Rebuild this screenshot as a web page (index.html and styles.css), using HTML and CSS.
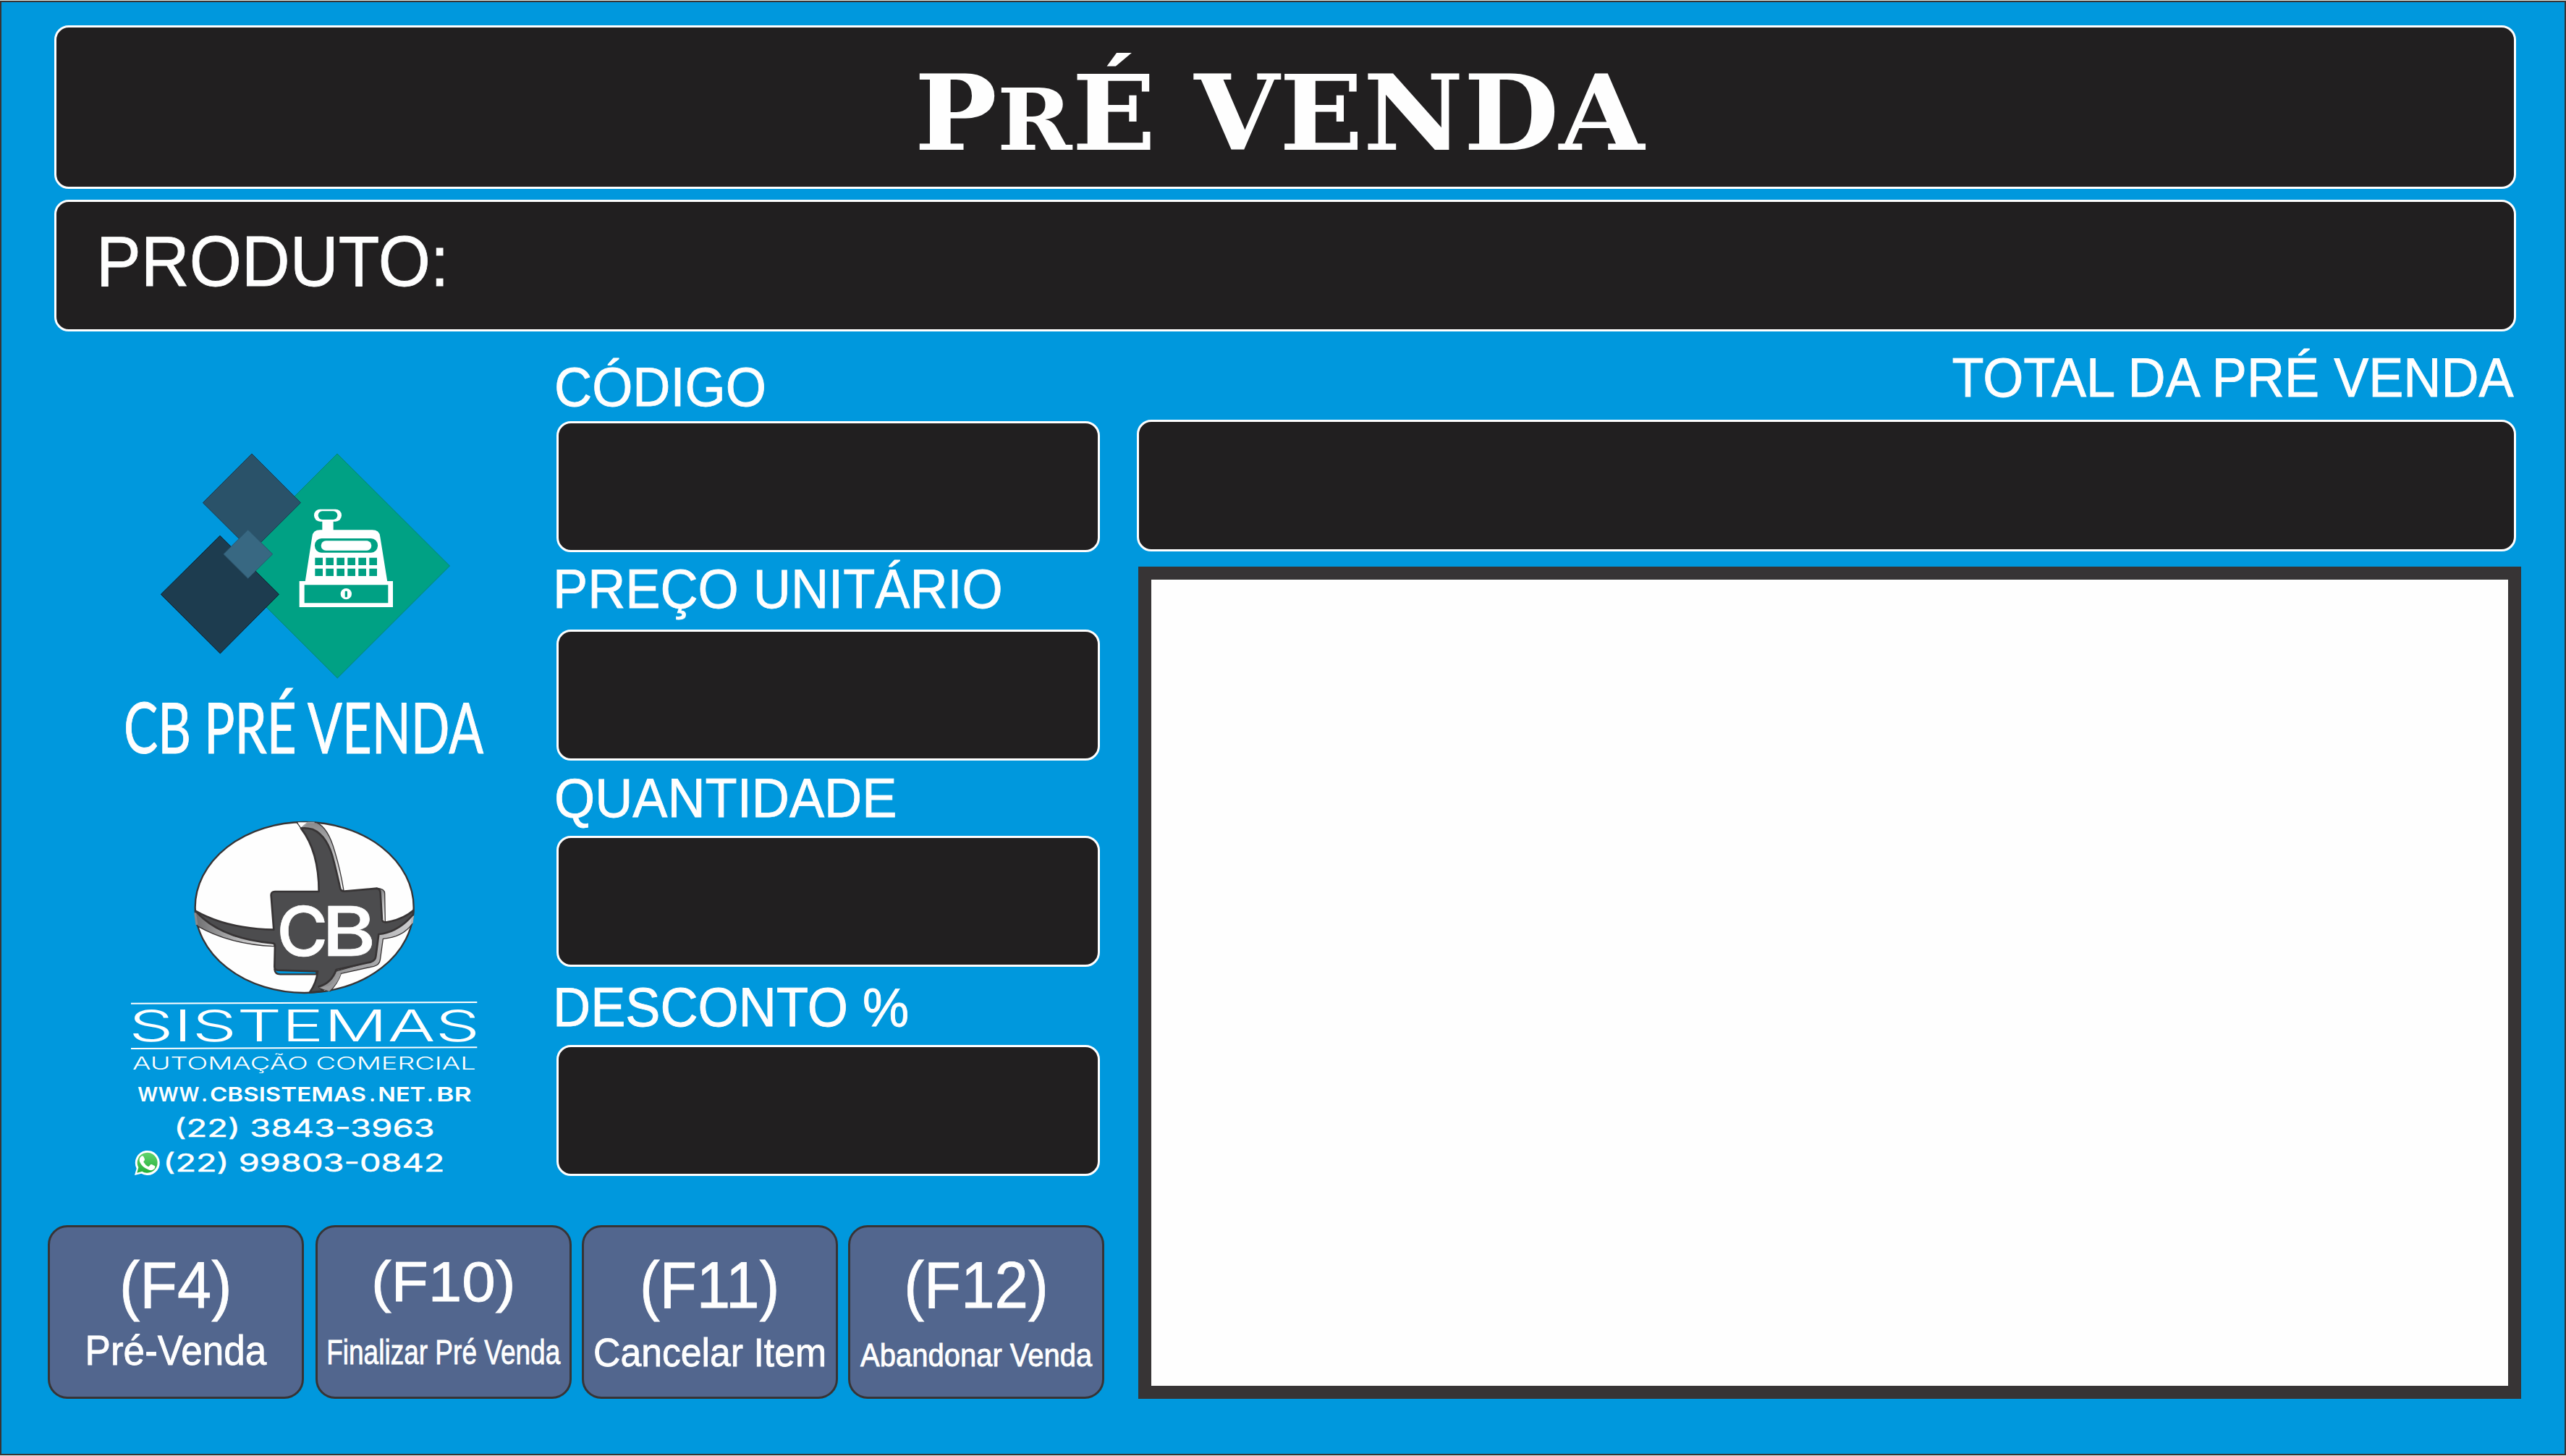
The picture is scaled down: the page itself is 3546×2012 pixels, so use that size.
FILE: index.html
```html
<!DOCTYPE html>
<html lang="pt-BR">
<head>
<meta charset="utf-8">
<title>Pré Venda</title>
<link rel="stylesheet" href="styles.css">
</head>
<body>
<div class="screen">
  <header class="panel title-bar">
    <h1 class="title">P<span class="small-cap">r</span>É VENDA</h1>
  </header>
  <section class="panel product-bar"><span class="text product-label">PRODUTO:</span></section>

  <main class="content">
    <div class="left">
      <div class="upper">
        <aside class="brand">
          <svg class="product-logo" viewBox="160 600 520 490">
            <path d="M466 627 621.500 782 466.300 937 311 782Z" fill="#00a184" stroke="#058674"/>
            <path d="M348 627 415.500 694.700 348 762 280.300 694.700Z" fill="#2a5269" stroke="#183c50"/>
            <path d="M304 740.300 385.500 821.300 304.300 903 222.300 821.300Z" fill="#1d3c4f" stroke="#0b202d"/>
            <path d="M342.700 732 376.700 765.700 342.700 799.300 309 765.700Z" fill="#386882" stroke="#2b566e"/>
            <g transform="translate(200 600) scale(.33333)" fill="#fff">
              <rect x="702" y="311" width="114" height="51" rx="25"/>
              <rect x="719" y="319" width="80" height="35" rx="17" fill="#00a184"/>
              <path d="M736 360h46v40h-46z"/>
              <path d="M665 612 694 425Q697 397 727 397H943Q973 397 976 425L1006 612Z"/>
              <rect x="705" y="432" width="261" height="59" rx="28" fill="#00a184"/>
              <rect x="731" y="442" width="209" height="40" rx="20"/>
              <path fill="#00a184" d="M706 512h32v31h-32zM751 512h32v31h-32zM796 512h32v31h-32zM841 512h32v31h-32zM886 512h32v31h-32zM931 512h32v31h-32zM706 557h32v31h-32zM751 557h32v31h-32zM796 557h32v31h-32zM841 557h32v31h-32zM886 557h32v31h-32zM931 557h32v31h-32z"/>
              <path d="M641 609h388v108H641z"/>
              <path d="M662 625h347v75H662z" fill="#00a184"/>
              <circle cx="835" cy="662" r="23"/>
              <rect x="830" y="650" width="10" height="26" rx="3" fill="#00a184"/>
            </g>
            <text class="logo-name" x="171" y="1041" textLength="497" lengthAdjust="spacingAndGlyphs">CB PRÉ VENDA</text>
          </svg>

          <svg class="company-logo" viewBox="160 1110 520 540">
            <defs>
              <linearGradient id="shadeDown" x1="0" y1="0" x2="0" y2="1"><stop offset="0" stop-color="#8a8a8c"/><stop offset="1" stop-color="#f4f4f4"/></linearGradient>
              <linearGradient id="shadeAcross" x1="0" y1="0" x2="1" y2="0"><stop offset="0" stop-color="#6f6f71"/><stop offset="1" stop-color="#f0f0f0"/></linearGradient>
              <linearGradient id="shadeCorner" x1="0" y1="1" x2="1" y2="0"><stop offset="0" stop-color="#8a8a8c"/><stop offset=".5" stop-color="#a8a8aa"/><stop offset="1" stop-color="#d0d0d2"/></linearGradient>
              <linearGradient id="chat" x1="0" y1="0" x2="0" y2="1"><stop offset="0" stop-color="#61d36c"/><stop offset="1" stop-color="#25b03b"/></linearGradient>
            </defs>
            <g transform="translate(240 1110) scale(.33333)" stroke-linejoin="round">
              <ellipse cx="542" cy="432" rx="453" ry="354" fill="#fefefe" stroke="#373435" stroke-width="7"/>
              <path d="M510 79 530 106" stroke="#373435" stroke-width="4"/>
              <path d="M514 79H556L531 103Z" fill="#fefefe"/>
              <path d="M528 104 556 80H592Q640 100 668 200 692 280 705 362L690 358 640 190 580 110Z" fill="url(#shadeDown)" stroke="#373435" stroke-width="4"/>
              <path d="M531 101 556 80H584" fill="none" stroke="#a0a0a2" stroke-width="6"/>
              <path d="M90 450 97 508Q230 585 417 593V578L250 550Z" fill="url(#shadeAcross)" stroke="#373435" stroke-width="4"/>
              <path d="M89 454 96 504" stroke="#8a8a8c" stroke-width="9"/>
              <path d="M842 352Q875 354 875 374L877 492H862Z" fill="url(#shadeDown)" stroke="#373435" stroke-width="4"/>
              <path d="M993 466 989 500Q950 555 868 562L856 650Q853 670 830 676L694 706Q680 748 648 779L602 766 660 700 820 655 845 543Z" fill="url(#shadeCorner)" stroke="#373435" stroke-width="4"/>
              <path d="M992 466 987 498" stroke="#b4b4b6" stroke-width="9"/>
              <path d="M418 688Q420 709 442 709H592V694Z" fill="#0098dd" stroke="#373435" stroke-width="7"/>
              <path d="M528 104Q548 100 576 108 640 135 665 245 680 305 690 350 692 366 708 365L842 353Q856 354 857 372L864 482Q866 495 882 493 950 482 994 444L992 462Q930 535 850 543L838 635Q836 652 818 658L674 690Q655 745 602 760L622 779 564 784Q592 745 597 697L430 692Q418 690 418 678L420 590Q420 580 408 580 190 560 90 446 220 520 415 524L404 382Q403 366 420 366H602Q602 200 528 104Z" fill="#4c4c4e" stroke="#373435" stroke-width="8"/>
              <path d="M602 764 645 757Q665 745 678 712L694 706Q680 748 645 779Z" fill="#9a9a9c"/>
              <text class="logo-cb" y="633"><tspan x="427" textLength="213" lengthAdjust="spacingAndGlyphs">C</tspan><tspan x="614" textLength="224" lengthAdjust="spacingAndGlyphs">B</tspan></text>
            </g>
            <g transform="translate(160 1360) scale(.33333)" fill="#fff">
              <path d="M63 80 1498 75M63 267 1498 262" stroke="#fff" stroke-width="6"/>
              <text class="logo-sistemas" x="54" y="237" textLength="1456" lengthAdjust="spacingAndGlyphs">SISTEMAS</text>
              <text class="logo-sub" x="69" y="355" textLength="1424" lengthAdjust="spacingAndGlyphs">AUTOMAÇÃO COMERCIAL</text>
              <text class="logo-site" y="486"><tspan x="91" textLength="255" lengthAdjust="spacingAndGlyphs">WWW</tspan><tspan x="355">.</tspan><tspan x="390" textLength="648" lengthAdjust="spacingAndGlyphs">CBSISTEMAS</tspan><tspan x="1051">.</tspan><tspan x="1087" textLength="197" lengthAdjust="spacingAndGlyphs">NET</tspan><tspan x="1290">.</tspan><tspan x="1329" textLength="146" lengthAdjust="spacingAndGlyphs">BR</tspan></text>
              <text class="logo-phone" x="241" y="632" textLength="1081" lengthAdjust="spacingAndGlyphs">(22) 3843-3963</text>
              <text class="logo-phone" x="196" y="778" textLength="1167" lengthAdjust="spacingAndGlyphs">(22) 99803-0842</text>
              <path d="M78 792 86 764A51 51 0 1 1 106 785Z"/>
              <path d="M88 782 94 760A42 42 0 1 1 109 776Z" fill="url(#chat)"/>
              <path d="M112 715q6-4 10 3l4 10q1 4-4 8-2 3 0 5 7 12 18 17 3 1 5-2l5-6q2-2 5-1l13 7q2 1 1 4-1 8-8 11-9 5-20 0-26-10-35-31-6-16 6-25z" transform="translate(-6 -2)"/>
            </g>
          </svg>
        </aside>

        <section class="fields">
          <div class="field code"><span class="text label">CÓDIGO</span><div class="panel box"></div></div>
          <div class="field price"><span class="text label">PREÇO UNITÁRIO</span><div class="panel box"></div></div>
          <div class="field quantity"><span class="text label">QUANTIDADE</span><div class="panel box"></div></div>
          <div class="field discount"><span class="text label">DESCONTO %</span><div class="panel box"></div></div>
        </section>
      </div>

      <nav class="keys">
        <button class="key f4"><span class="text code-name">(F4)</span><span class="text action">Pré-Venda</span></button>
        <button class="key f10"><span class="text code-name">(F10)</span><span class="text action">Finalizar Pré Venda</span></button>
        <button class="key f11"><span class="text code-name">(F11)</span><span class="text action">Cancelar Item</span></button>
        <button class="key f12"><span class="text code-name">(F12)</span><span class="text action">Abandonar Venda</span></button>
      </nav>
    </div>

    <section class="right">
      <span class="text total-label">TOTAL DA PRÉ VENDA</span>
      <div class="panel total-box"></div>
      <div class="items"></div>
    </section>
  </main>
</div>
</body>
</html>
```
FILE: styles.css
```css
* { box-sizing: border-box; }

body {
  margin: 0;
  padding: 1px 0;
  background: #dfe8e2;
  font-family: "Liberation Sans", Arial, sans-serif;
  color: #fefefe;
}

.screen {
  display: flex;
  flex-direction: column;
  height: 2010px;
  padding: 32px 60px 0 64px;
  background: #0098dd;
  border: 2px solid #373435;
}

.panel {
  background: #211f20;
  border: 3px solid #fefefe;
  border-radius: 20px;
}

/* The baseline of a line-height 1 text sits at 84.65% of its height. */
.text {
  display: block;
  width: max-content;
  line-height: 1;
  white-space: nowrap;
  transform-origin: 0 84.65%;
  -webkit-text-stroke: .8px #fefefe;
}

.title-bar {
  display: flex;
  justify-content: center;
  height: 226px;
  margin: 0 7px 15px 9px;
}

.title {
  margin: 44px 0 0 -16px;
  height: 150px;
  font: bold 144px/150px "DejaVu Serif", serif;
  white-space: nowrap;
  transform: scaleX(1.055);
}

.small-cap { font-size: .82em; text-transform: uppercase; }

.product-bar {
  height: 182px;
  margin: 0 7px 0 9px;
  padding: 37px 0 0 55px;
}

.product-label { font-size: 94px; transform: scale(.986, 1.045); }

.content { display: flex; justify-content: space-between; }

.left { width: 1460px; }

.upper { display: flex; height: 1235px; }

.brand {
  display: flex;
  flex-direction: column;
  gap: 20px;
  width: 703px;
  padding: 142px 0 0 94px;
}

.brand svg { display: block; width: 520px; flex: none; overflow: visible; }
.product-logo { height: 490px; }
.company-logo { height: 540px; }

.logo-name { font: 400 96px Lato, sans-serif; fill: #fefefe; stroke: #fefefe; stroke-width: 1; }
.logo-cb { font: 500 286px Inter, sans-serif; fill: #fefefe; stroke: #fefefe; stroke-width: 2; }
.logo-sistemas { font: 300 182px Inter, sans-serif; }
.logo-sub { font: 300 72px Inter, sans-serif; }
.logo-site { font: 600 81px Inter, sans-serif; }
.logo-phone { font: 400 100px Inter, sans-serif; stroke: #fff; stroke-width: 1.5; }

.fields { width: 751px; }
.field { display: flex; flex-direction: column; }
.label { font-size: 73px; transform: scale(.989, 1.04); }
.box { height: 181px; }

.code { padding-top: 41px; gap: 10px; }
.price { padding-top: 15px; gap: 19px; }
.quantity { padding-top: 16px; gap: 15px; }
.discount { padding-top: 20px; gap: 15px; }
.code .label { margin-left: -3px; }
.price .label, .discount .label { margin-left: -5px; }
.quantity .label { margin-left: -3px; }

.keys {
  display: flex;
  gap: 14px;
}

.key {
  display: flex;
  flex: none;
  flex-direction: column;
  align-items: center;
  width: 354px;
  height: 240px;
  padding: 0;
  color: inherit;
  font-family: inherit;
  background: #52668e;
  border: 3px solid #373435;
  border-radius: 27px;
}

.key .text { transform-origin: 50% 84.65%; }
.code-name { margin-top: 37px; font-size: 87px; }
.action { font-size: 55px; }

.f4 { margin-right: 2px; }
.f4 .code-name { transform: scale(.975, 1.035); }
.f4 .action { margin-top: 20px; transform: scale(.965, 1.04); }
.f10 .code-name { margin-top: 38px; font-size: 76px; transform: scale(1.1, 1.03); }
.f10 .action { margin-top: 36px; font-size: 46px; transform: scale(.805, 1.04); }
.f11 .code-name { transform: scale(.96, 1.035); }
.f11 .action { margin-top: 22px; font-size: 54px; transform: scale(.958, 1.04); }
.f12 .code-name { transform: scale(.96, 1.035); }
.f12 .action { margin-top: 33px; font-size: 42px; transform: scale(.952, 1.04); }

.right {
  display: flex;
  flex-direction: column;
  width: 1913px;
}

.total-label {
  align-self: flex-end;
  margin: 28px 10px 0 0;
  font-size: 73px;
  transform: scale(.988, 1.045);
  transform-origin: 100% 84.65%;
}

.total-box {
  height: 182px;
  margin: 21px 7px 0 0;
}

.items {
  height: 1150px;
  margin: 21px 0 0 2px;
  background: #fefefe;
  border: 18px solid #373435;
}
```
